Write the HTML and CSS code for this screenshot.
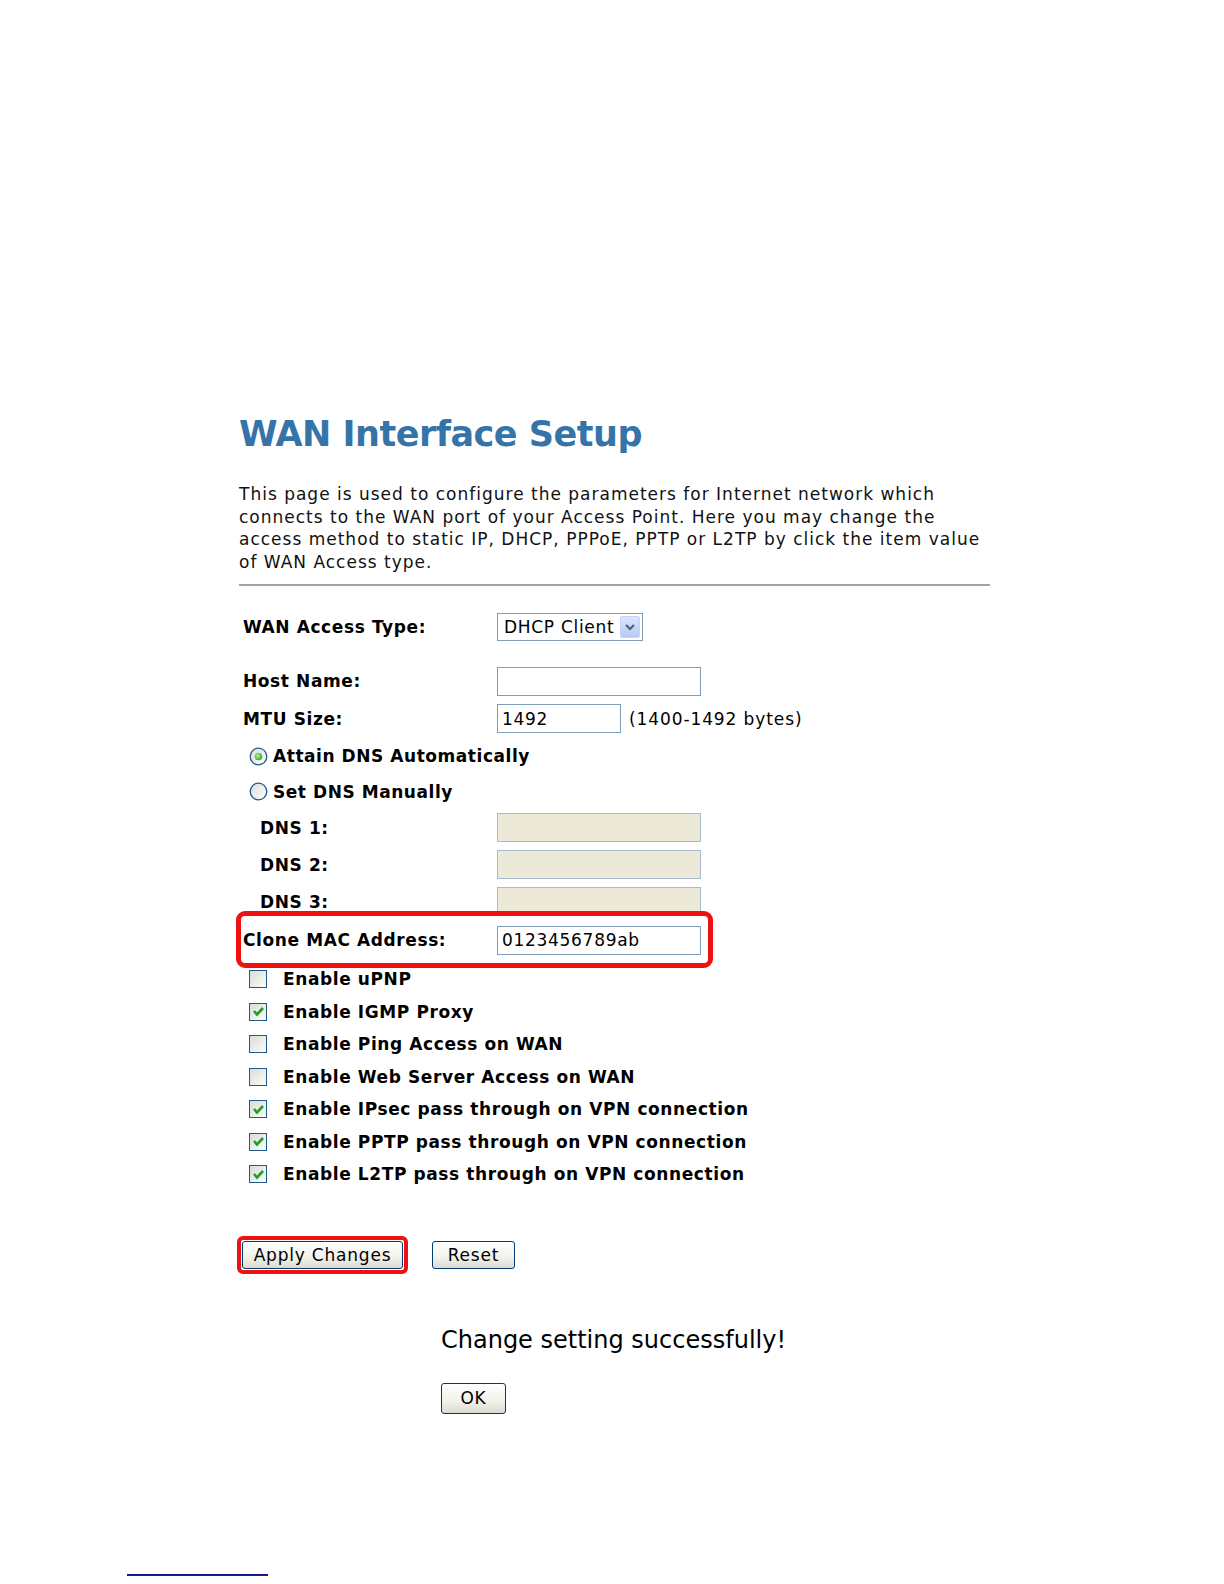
FILE: index.html
```html
<!DOCTYPE html>
<html lang="en">
<head>
  <meta charset="UTF-8">
  <title>WAN Interface Setup</title>
  <link rel="stylesheet" href="styles.css">
</head>
<body>
  <div class="page">
    <h1>WAN Interface Setup</h1>
    <p class="intro">This page is used to configure the parameters for Internet network which<br>
      connects to the WAN port of your Access Point. Here you may change the<br>
      access method to static IP, DHCP, PPPoE, PPTP or L2TP by click the item value<br>
      of WAN Access type.</p>
    <hr>

    <form class="wan-form">
      <div class="row row-type">
        <label class="name">WAN Access Type:</label>
        <div class="select">
          <span class="select-text">DHCP Client</span>
          <span class="select-btn">
            <svg width="12" height="9" viewBox="0 0 12 9"><path d="M2 2 L6 6 L10 2" fill="none" stroke="#4d6185" stroke-width="2.2"/></svg>
          </span>
        </div>
      </div>

      <div class="row row-host">
        <label class="name">Host Name:</label>
        <input type="text" class="field field-wide">
      </div>

      <div class="row row-mtu">
        <label class="name">MTU Size:</label>
        <input type="text" class="field field-short" value="1492">
        <span class="hint">(1400-1492 bytes)</span>
      </div>

      <div class="row row-radio">
        <span class="radio">
          <svg width="19" height="19" viewBox="0 0 19 19">
            <defs>
              <linearGradient id="rg" x1="0" y1="0" x2="1" y2="1">
                <stop offset="0" stop-color="#dcdcd6"/>
                <stop offset="1" stop-color="#ffffff"/>
              </linearGradient>
              <radialGradient id="dot" cx="0.4" cy="0.4" r="0.7">
                <stop offset="0" stop-color="#b6f0a0"/>
                <stop offset="1" stop-color="#23a323"/>
              </radialGradient>
            </defs>
            <circle cx="9.5" cy="9.5" r="8.3" fill="url(#rg)" stroke="#1f5a8c" stroke-width="1.3"/>
            <circle cx="9.5" cy="9.5" r="3.8" fill="url(#dot)"/>
          </svg>
        </span>
        <span class="radio-text">Attain DNS Automatically</span>
      </div>

      <div class="row row-radio2">
        <span class="radio">
          <svg width="19" height="19" viewBox="0 0 19 19">
            <circle cx="9.5" cy="9.5" r="8.3" fill="url(#rg)" stroke="#1f5a8c" stroke-width="1.3"/>
          </svg>
        </span>
        <span class="radio-text">Set DNS Manually</span>
      </div>

      <div class="row row-dns">
        <label class="name sub">DNS 1:</label>
        <input type="text" class="field field-wide" disabled>
      </div>
      <div class="row row-dns">
        <label class="name sub">DNS 2:</label>
        <input type="text" class="field field-wide" disabled>
      </div>
      <div class="row row-dns">
        <label class="name sub">DNS 3:</label>
        <input type="text" class="field field-wide" disabled>
      </div>

      <div class="row row-mac">
        <label class="name">Clone MAC Address:</label>
        <input type="text" class="field field-wide" value="0123456789ab">
      </div>

      <div class="checks">
        <div class="check">
          <span class="box"></span>
          <span>Enable uPNP</span>
        </div>
        <div class="check">
          <span class="box on"><svg width="13" height="11" viewBox="0 0 13 11"><path d="M2 5 L5 8.5 L11 2" fill="none" stroke="#21a121" stroke-width="2.6"/></svg></span>
          <span>Enable IGMP Proxy</span>
        </div>
        <div class="check">
          <span class="box"></span>
          <span>Enable Ping Access on WAN</span>
        </div>
        <div class="check">
          <span class="box"></span>
          <span>Enable Web Server Access on WAN</span>
        </div>
        <div class="check">
          <span class="box on"><svg width="13" height="11" viewBox="0 0 13 11"><path d="M2 5 L5 8.5 L11 2" fill="none" stroke="#21a121" stroke-width="2.6"/></svg></span>
          <span>Enable IPsec pass through on VPN connection</span>
        </div>
        <div class="check">
          <span class="box on"><svg width="13" height="11" viewBox="0 0 13 11"><path d="M2 5 L5 8.5 L11 2" fill="none" stroke="#21a121" stroke-width="2.6"/></svg></span>
          <span>Enable PPTP pass through on VPN connection</span>
        </div>
        <div class="check">
          <span class="box on"><svg width="13" height="11" viewBox="0 0 13 11"><path d="M2 5 L5 8.5 L11 2" fill="none" stroke="#21a121" stroke-width="2.6"/></svg></span>
          <span>Enable L2TP pass through on VPN connection</span>
        </div>
      </div>

      <div class="actions">
        <span class="mark"><button type="button" class="btn btn-apply">Apply Changes</button></span>
        <button type="button" class="btn btn-reset">Reset</button>
      </div>
    </form>

    <div class="result">
      <p class="result-msg">Change setting successfully!</p>
      <button type="button" class="btn btn-ok">OK</button>
    </div>
  </div>

  <div class="footnote-rule"></div>
</body>
</html>
```

FILE: styles.css
```css
body {
  margin: 0;
  background: #fff;
  color: #000;
  font-family: "DejaVu Sans", Verdana, sans-serif;
}

.page {
  padding: 412px 0 0 239px;
  width: 751px;
}

h1 {
  margin: 0;
  font-size: 35px;
  line-height: 44px;
  letter-spacing: -0.5px;
  font-weight: bold;
  color: #3574a8;
}

.intro {
  margin: 27px 0 0;
  font-size: 17px;
  line-height: 22.5px;
  letter-spacing: 1px;
  color: #111;
}

hr {
  border: 0;
  border-top: 2px solid #a3a3a3;
  margin: 11px 0 0;
  width: 751px;
}

/* form rows */
.wan-form {
  margin-top: 23px;
}

.row {
  display: flex;
  align-items: center;
  height: 36px;
}

.row-type { margin-bottom: 18px; }
.row-mtu { height: 39px; }
.row-radio2 { height: 35px; }
.row-dns { height: 37px; }
.row-mac {
  height: 40px;
  position: relative;
}

/* red annotation round the MAC row */
.row-mac::after {
  content: "";
  position: absolute;
  left: -3px;
  top: -9px;
  width: 467px;
  height: 47px;
  border: 5px solid #ee1111;
  border-radius: 9px;
}

.name {
  width: 254px;
  padding-left: 4px;
  font-size: 17px;
  letter-spacing: 0.6px;
  font-weight: bold;
  flex-shrink: 0;
}

.name.sub {
  padding-left: 21px;
  width: 237px;
}

.field {
  box-sizing: border-box;
  height: 29px;
  border: 1px solid #7f9db9;
  padding: 0 4px;
  font-family: "DejaVu Sans", Verdana, sans-serif;
  font-size: 17px;
  letter-spacing: 0.7px;
  color: #000;
  background: #fff;
}

.field-wide { width: 204px; }
.field-short { width: 124px; }

.field:disabled {
  background: #ece9d8;
  border-color: #a5b9cf;
}

.hint {
  margin-left: 8px;
  font-size: 17px;
  letter-spacing: 0.9px;
}

.select {
  box-sizing: border-box;
  display: flex;
  align-items: center;
  justify-content: space-between;
  width: 146px;
  height: 28px;
  border: 1px solid #7f9db9;
  padding: 0 2px 0 6px;
  font-size: 17px;
  letter-spacing: 0.7px;
}

.select-btn {
  display: flex;
  align-items: center;
  justify-content: center;
  width: 20px;
  height: 22px;
  border-radius: 2px;
  background: linear-gradient(#dae5fd, #b6cbf6);
  border: 1px solid #c3d3fd;
  box-sizing: border-box;
}

.radio {
  display: flex;
  margin-left: 10px;
  margin-right: 5px;
}

.radio-text {
  font-size: 17px;
  letter-spacing: 0.55px;
  font-weight: bold;
}

/* checkbox list */
.checks {
  margin-top: 3px;
}

.check {
  display: flex;
  align-items: center;
  height: 32.5px;
  font-size: 17px;
  letter-spacing: 0.6px;
  font-weight: bold;
}

.box {
  box-sizing: border-box;
  display: flex;
  align-items: center;
  justify-content: center;
  width: 18px;
  height: 18px;
  margin-left: 10px;
  margin-right: 16px;
  border: 1px solid #1f5a8c;
  background: linear-gradient(135deg, #dcdcd6, #fbfbf9);
}

/* buttons */
.actions {
  display: flex;
  align-items: center;
  margin-top: 45px;
}

.mark {
  display: inline-flex;
  border: 4px solid #ee1111;
  border-radius: 6px;
  padding: 1px;
  margin-left: -2px;
}

.btn {
  box-sizing: border-box;
  height: 28px;
  padding: 0 6px;
  border: 1px solid #003c74;
  border-radius: 3px;
  background: linear-gradient(#ffffff, #f2f1ea 60%, #dcdad0);
  font-family: "DejaVu Sans", Verdana, sans-serif;
  font-size: 17px;
  letter-spacing: 0.8px;
  color: #000;
}

.btn-apply { width: 161px; }
.btn-reset {
  width: 83px;
  margin-left: 24px;
}

.result {
  padding-left: 202px;
  margin-top: 51px;
}

.result-msg {
  margin: 0;
  font-size: 24px;
  line-height: 30px;
}

.btn-ok {
  width: 65px;
  height: 31px;
  margin-top: 28px;
}

.footnote-rule {
  width: 141px;
  height: 0;
  border-top: 2px solid #1a1a8a;
  margin: 160px 0 0 127px;
}
```
